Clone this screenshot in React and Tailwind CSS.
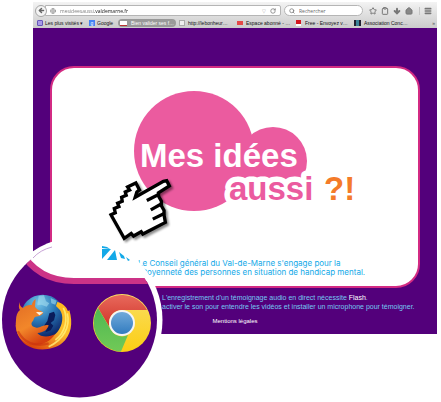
import { Star, Clipboard, ArrowDown, Home, Menu, RotateCw, Search, ArrowLeft, Globe } from "lucide-react";

function Toolbar() {
  return (
    <header className="bg-linear-to-b from-[#f3f3f3] to-[#cbcbcb] font-['Open_Sans',sans-serif] text-[5px] leading-[10px] text-[#333]">
      <div className="flex h-4 items-center pt-px pr-[5px] pl-0.5">
        <button aria-label="Précédent" className="z-10 flex size-3 shrink-0 items-center justify-center rounded-full border border-[#a5a5a5] bg-[#f4f4f4]">
          <ArrowLeft size={7} strokeWidth={5} color="#666" />
        </button>
        <div className="-ml-0.5 flex h-[11px] min-w-0 flex-1 items-center gap-1 rounded-r-xs border border-[#b5b5b5] bg-white pr-1 pl-1">
          <Globe size={6} color="#777" className="shrink-0" />
          <input
            aria-label="Adresse"
            defaultValue="mesideesaussi.valdemarne.fr"
            className="min-w-0 flex-1 bg-linear-[90deg,#777_34px,#111_34px] bg-clip-text text-transparent outline-none"
          />
          <span className="text-[#aaa]">▽</span>
          <button aria-label="Actualiser"><RotateCw size={6} strokeWidth={3} color="#777" /></button>
        </div>
        <div className="ml-[3px] flex h-[11px] w-[79px] shrink-0 items-center gap-1 rounded-full border border-[#b5b5b5] bg-white px-1">
          <Search size={6} strokeWidth={3} color="#777" className="shrink-0" />
          <input aria-label="Rechercher" placeholder="Rechercher" className="w-full min-w-0 outline-none placeholder:text-[#666]" />
        </div>
        <div className="ml-1.5 flex shrink-0 items-center gap-1 text-[#777]">
          <button aria-label="Favoris"><Star size={8} strokeWidth={3} /></button>
          <button aria-label="Liste"><Clipboard size={8} strokeWidth={3} /></button>
          <button aria-label="Téléchargements"><ArrowDown size={8} strokeWidth={6} /></button>
          <button aria-label="Accueil"><Home size={8} strokeWidth={3} fill="#888" /></button>
        </div>
        <button aria-label="Menu" className="ml-1.5 shrink-0 border-l border-[#c5c5c5] pl-1 text-[#777]"><Menu size={8} strokeWidth={5} /></button>
      </div>
      <nav className="flex h-[10px] items-center overflow-hidden pr-0.5 pl-1 font-['Liberation_Sans',sans-serif] whitespace-nowrap text-[#111]">
        <a href="#visites" className="flex w-[52px] items-center gap-0.5">
          <span className="size-1.5 rounded-[1px] border border-[#6656ba] bg-[#a99be8]" />Les plus visités ▾
        </a>
        <a href="#google" className="flex w-[29px] items-center gap-0.5">
          <span className="flex size-1.5 items-center justify-center bg-[#4484f4] text-white">g</span>Google
        </a>
        <a href="#valider" className="flex h-2 w-[58px] items-center gap-1 rounded-full bg-[#999] pl-0.5 text-white">
          <span className="h-[5px] w-[7px] border-b border-[#b33] bg-white" />Bien valider ses f…
        </a>
        <a href="#bonheur" className="ml-[3px] flex w-[58px] items-center gap-[3px]">
          <span className="size-1.5 border border-[#aaa] bg-[#eee]" />http://lebonheur…
        </a>
        <a href="#abonne" className="flex w-[59px] items-center gap-[3px]">
          <span className="h-1 w-1.5 bg-[#e34848]" />Espace abonné - …
        </a>
        <a href="#free" className="flex w-[58px] items-center gap-1">
          <span className="h-1.5 w-[5px] border-b-2 border-white bg-[#d31820]" />Free - Envoyez v…
        </a>
        <a href="#association" className="flex items-center gap-[3px]">
          <span className="h-1.5 w-[7px] border-x-2 border-[#223] bg-[#3a8298]" />Association Conc…
        </a>
        <button aria-label="Plus de favoris" className="ml-auto text-[#555]">»</button>
      </nav>
    </header>
  );
}

function Logo() {
  return (
    <svg viewBox="134 91 224 120" className="h-[120px] w-[224px]" role="img" aria-label="Mes idées aussi ?!">
      <g fill="#eb5b9f">
        <circle cx="194" cy="151" r="60" />
        <circle cx="273" cy="161" r="34" />
      </g>
      <g fontFamily="'Liberation Sans Narrow', 'Liberation Sans', sans-serif" fontWeight="700" fontSize="33">
        <text x="140" y="167" fill="#fff">Mes idées</text>
        <text x="229" y="200" fill="#eb5b9f" stroke="#fff" strokeWidth="11" strokeLinejoin="round" paintOrder="stroke">aussi</text>
        <text x="324" y="200" fill="#f47b29">?!</text>
      </g>
    </svg>
  );
}

function Cursor() {
  return (
    <svg viewBox="50 286 205 205" className="absolute top-[176px] left-[107px] size-[68px]" aria-hidden="true">
      <defs>
        <filter id="hand-shadow" x="-20%" y="-20%" width="150%" height="150%">
          <feDropShadow dx="6" dy="6" stdDeviation="4" floodOpacity="0.45" />
        </filter>
      </defs>
      <g filter="url(#hand-shadow)" stroke="#000" strokeWidth="10" strokeLinejoin="miter">
        <path fill="#fff" d="M135 350L220 302L230 300L238 316L205 337L206 348L214 362L214 376L222 390L222 404L226 426L158 461L153 454L130 467L123 459L102 474L62 403L75 397L72 384L86 378L82 368L96 362L94 350L108 344L105 334L118 328L112 319L137 307L148 328L140 334Z" />
        <path fill="none" d="M170 360L207 341M182 388L216 369M188 416L224 398" />
      </g>
    </svg>
  );
}

function Firefox() {
  return (
    <g transform="translate(0 280) scale(.3333)">
      <circle cx="128" cy="110" r="66" fill="url(#globe)" />
      <path d="M116 48l16-2 6 18 10 6-8 10-16-6-12 2zM152 54l18 8-4 12-12-4z" fill="#a4dcee" opacity=".6" />
      <path d="M148 100l14-5 4 10-4 16-10 8 8 8-8 14-16 6 6-14-10-6 10-14z" fill="#0a1c5a" />
      <path d="M172 66C188 70 200 80 204 94L208 90C220 130 214 166 186 190C158 212 110 215 80 196C60 182 48 160 47 135L90 165C120 185 154 178 172 156C188 136 192 108 180 90L168 78Z" fill="url(#tail)" />
      <path d="M190 84C206 116 196 158 166 180M202 100C212 140 190 180 146 200" fill="none" stroke="#fff27a" strokeWidth="5" opacity=".8" />
      <path d="M60 66C58 76 62 81 69 84C76 76 86 74 95 75C97 68 100 62 107 57L105 80C112 92 124 90 130 98C127 105 118 108 106 110C100 114 102 120 98 124C90 132 96 142 110 143C122 144 132 132 146 136C142 150 130 158 112 159C122 173 150 172 165 162C150 190 110 203 80 190C55 178 44 150 48 120C48 108 52 96 60 90C55 84 56 74 60 66Z" fill="url(#fox)" />
      <path d="M108 96l22 1-12 9z" fill="#fff3df" />
      <path d="M54 154C70 188 106 202 146 190" fill="none" stroke="#c9320d" strokeWidth="7" opacity=".6" />
    </g>
  );
}

function Chrome() {
  return (
    <g>
      <circle cx="122" cy="323" r="29" fill="url(#yellow)" />
      <path d="M98 308A28.500 28.500 0 0 1 147 310H122A13 13 0 0 0 110 328Z" fill="url(#red)" />
      <path d="M98 308L111 330A13 13 0 0 0 128 335L121 351.500A28.500 28.500 0 0 1 98 308Z" fill="url(#green)" />
      <circle cx="122" cy="323" r="13" fill="#f5f5f5" />
      <circle cx="122" cy="323" r="11" fill="url(#blue)" />
    </g>
  );
}

function Lens() {
  return (
    <svg viewBox="0 236 164 164" className="absolute top-[236px] left-0 size-[164px]" role="img" aria-label="Firefox et Chrome">
      <defs>
        <clipPath id="lens"><circle cx="79.500" cy="320" r="77.500" /></clipPath>
        <radialGradient id="globe" cx=".4" cy=".2" r=".8"><stop stopColor="#75c5e9" /><stop offset=".5" stopColor="#2977b6" /><stop offset="1" stopColor="#0c2366" /></radialGradient>
        <linearGradient id="fox" x2=".5" y2="1"><stop stopColor="#e06a24" /><stop offset=".6" stopColor="#f2872a" /><stop offset="1" stopColor="#d5400f" /></linearGradient>
        <linearGradient id="tail" x1="1" x2=".3" y2="1"><stop stopColor="#ffb51b" /><stop offset=".5" stopColor="#fdc02c" /><stop offset="1" stopColor="#d93c0b" /></linearGradient>
        <linearGradient id="red" x2="0" y2="1"><stop stopColor="#e8695c" /><stop offset="1" stopColor="#cf3227" /></linearGradient>
        <linearGradient id="green" x2="0" y2="1"><stop stopColor="#4fb852" /><stop offset="1" stopColor="#71c957" /></linearGradient>
        <linearGradient id="yellow" x2="0" y2="1"><stop stopColor="#f9df63" /><stop offset="1" stopColor="#fccd13" /></linearGradient>
        <linearGradient id="blue" x2="0" y2="1"><stop stopColor="#71a9da" /><stop offset="1" stopColor="#327cbf" /></linearGradient>
      </defs>
      <circle cx="79.500" cy="320" r="83" fill="#fff" />
      <g clipPath="url(#lens)">
        <path d="M0 256H24L74 281H164V400H0Z" fill="#53007b" />
        <path d="M20 230V250C30 268 46 281 74 281H170V230Z" fill="#fff" stroke="#cc3387" strokeWidth="6" />
      </g>
      <path d="M33 258Q40 250 52 247" fill="none" stroke="#c8a3d6" />
      <g fill="#13a9e8">
        <path d="M102 246l5 1 3 2-8-1zM102 249h9l-9 10zM115 250l2 10h-10zM119 252l5 4 1 3-4-1zM126 257l4 3-2 1z" />
      </g>
      <Firefox />
      <Chrome />
    </svg>
  );
}

export default function App() {
  return (
    <div className="relative min-h-[402px] bg-white pt-0.5 pr-1 pl-[33px] font-['Liberation_Sans',sans-serif]">
      <Toolbar />
      <main className="bg-[#53007b] px-[17px] pt-[38px] pb-2">
        <section className="rounded-[24px] border-2 border-[#d32b83] bg-white pt-[23px] pb-[9px]">
          <div className="flex justify-center pl-[22px]">
            <Logo />
          </div>
          <p className="mt-12 pl-[86px] font-['Inter','Liberation_Sans',sans-serif] text-[8px] leading-[9px] whitespace-nowrap text-[#13a9e8]">
            Le Conseil général du Val-de-Marne s'engage pour la<br />
            citoyenneté des personnes en situation de handicap mental.
          </p>
        </section>
        <footer className="pt-[5px] text-[7px] leading-[9px] text-[#74c9f3]">
          <p className="pl-[112px] whitespace-nowrap">
            L'enregistrement d'un témoignage audio en direct nécessite <a href="#flash" className="text-white">Flash</a>.<br />
            activer le son pour entendre les vidéos et installer un microphone pour témoigner.
          </p>
          <p className="mt-1.5 text-center text-[6px] text-white"><a href="#mentions">Mentions légales</a></p>
        </footer>
      </main>
      <Lens />
      <Cursor />
    </div>
  );
}
